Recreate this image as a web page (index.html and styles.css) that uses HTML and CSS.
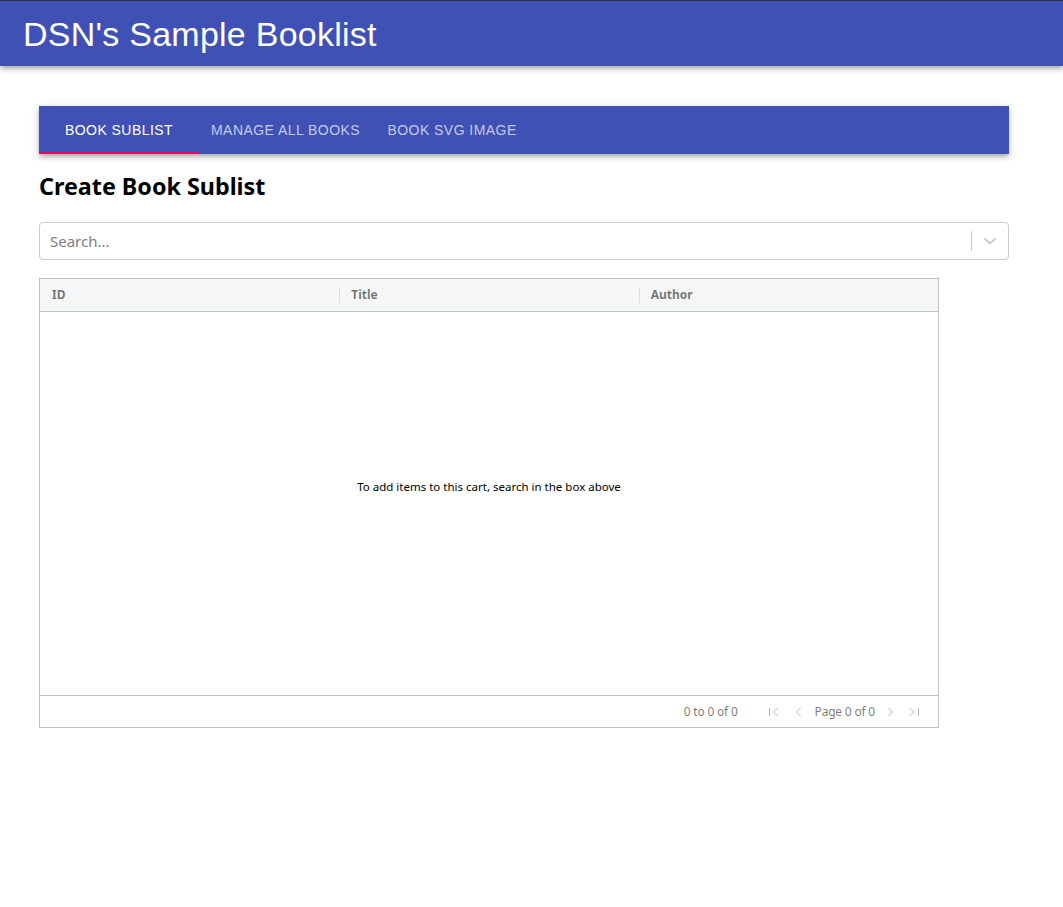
FILE: index.html
```html
<!DOCTYPE html>
<html>
<head>
<meta charset="utf-8">
<link rel="stylesheet" href="styles.css">
</head>
<body>
<header class="appbar">
  <h1 class="app-title">DSN's Sample Booklist</h1>
</header>
<main class="main">
  <nav class="tabs">
    <div class="tab active">BOOK SUBLIST</div>
    <div class="tab">MANAGE ALL BOOKS</div>
    <div class="tab">BOOK SVG IMAGE</div>
  </nav>
  <h2 class="page-title">Create Book Sublist</h2>
  <div class="select">
    <div class="select-value">Search...</div>
    <div class="select-indicators">
      <span class="select-sep"></span>
      <span class="select-arrow">
        <svg width="20" height="20" viewBox="0 0 20 20"><path d="M4.5 7.5 L10 12.5 L15.5 7.5" fill="none" stroke="#ccc" stroke-width="2"/></svg>
      </span>
    </div>
  </div>
  <div class="grid">
    <div class="grid-header">
      <div class="hcell">ID</div>
      <div class="hcell">Title</div>
      <div class="hcell">Author</div>
    </div>
    <div class="grid-body">
      <span class="overlay">To add items to this cart, search in the box above</span>
    </div>
    <div class="paging">
      <span class="row-summary">0 to 0 of 0</span>
      <svg class="pg-ic pg-first" width="12" height="12" viewBox="0 0 12 12"><path d="M1.5 2 V10 M9.5 2 L5.5 6 L9.5 10" fill="none" stroke="#b5b5b5" stroke-width="1"/></svg>
      <svg class="pg-ic pg-prev" width="12" height="12" viewBox="0 0 12 12"><path d="M8.5 2 L4.5 6 L8.5 10" fill="none" stroke="#b5b5b5" stroke-width="1"/></svg>
      <span class="pg-text">Page 0 of 0</span>
      <svg class="pg-ic pg-next" width="12" height="12" viewBox="0 0 12 12"><path d="M3.5 2 L7.5 6 L3.5 10" fill="none" stroke="#b5b5b5" stroke-width="1"/></svg>
      <svg class="pg-ic pg-last" width="12" height="12" viewBox="0 0 12 12"><path d="M1.5 2 L5.5 6 L1.5 10 M10.5 2 V10" fill="none" stroke="#b5b5b5" stroke-width="1"/></svg>
    </div>
  </div>
</main>
</body>
</html>
```
FILE: styles.css
```css
html, body {
  margin: 0;
  padding: 0;
  background: #fff;
}
body {
  font-family: "Noto Sans", "DejaVu Sans", sans-serif;
  color: #000;
}
.appbar {
  height: 65px;
  border-top: 1px solid #333;
  background: #3f51b5;
  box-shadow: 0 2px 4px -1px rgba(0,0,0,0.2), 0 4px 5px 0 rgba(0,0,0,0.14), 0 1px 10px 0 rgba(0,0,0,0.12);
  display: flex;
  align-items: center;
  padding-left: 23px;
}
.app-title {
  margin: 0;
  font-family: "Liberation Sans", Arial, sans-serif;
  font-weight: 400;
  font-size: 34px;
  letter-spacing: 0.25px;
  color: #fff;
  line-height: 1;
}
.main {
  width: 970px;
  margin-left: 39px;
  padding-top: 40px;
}
.tabs {
  display: flex;
  height: 48px;
  background: #3f51b5;
  box-shadow: 0 2px 4px -1px rgba(0,0,0,0.2), 0 4px 5px 0 rgba(0,0,0,0.14), 0 1px 10px 0 rgba(0,0,0,0.12);
}
.tab {
  min-width: 160px;
  padding: 0 12px;
  box-sizing: border-box;
  display: flex;
  align-items: center;
  justify-content: center;
  font-family: "Liberation Sans", Arial, sans-serif;
  font-size: 14px;
  letter-spacing: 0.45px;
  color: rgba(255,255,255,0.7);
  border-bottom: 2px solid transparent;
  padding-top: 2px;
}
.tab.active {
  color: #fff;
  border-bottom-color: #f50057;
}
.page-title {
  margin: 17px 0 21px;
  font-size: 23.3px;
  font-weight: 700;
  line-height: 30px;
}
.select {
  height: 38px;
  box-sizing: border-box;
  border: 1px solid #ccc;
  border-radius: 4px;
  display: flex;
  align-items: center;
}
.select-value {
  flex: 1;
  padding-left: 10px;
  font-size: 15px;
  color: #808080;
}
.select-indicators {
  display: flex;
  align-items: center;
  align-self: stretch;
}
.select-sep {
  width: 1px;
  height: 20px;
  background: #ccc;
}
.select-arrow {
  width: 36px;
  display: flex;
  justify-content: center;
}
.grid {
  margin-top: 18px;
  width: 900px;
  height: 450px;
  box-sizing: border-box;
  border: 1px solid #bdc3c7;
  display: flex;
  flex-direction: column;
}
.grid-header {
  height: 33px;
  box-sizing: border-box;
  background: #f5f7f7;
  border-bottom: 1px solid #bdc3c7;
  display: flex;
}
.hcell {
  width: 300px;
  box-sizing: border-box;
  padding-left: 12px;
  padding-bottom: 2px;
  font-size: 12px;
  font-weight: 700;
  color: rgba(0,0,0,0.54);
  display: flex;
  align-items: center;
  position: relative;
}
.hcell::after {
  content: "";
  position: absolute;
  right: -1px;
  top: 8px;
  height: 16px;
  width: 1px;
  background: rgba(189,195,199,0.5);
}
.grid-body {
  flex: 1;
  display: flex;
  align-items: center;
  justify-content: center;
  padding-bottom: 34px;
}
.overlay {
  font-size: 11.5px;
  color: #000;
}
.paging {
  height: 32px;
  box-sizing: border-box;
  border-top: 1px solid #bdc3c7;
  display: flex;
  align-items: center;
  justify-content: flex-end;
  padding-right: 18px;
  font-size: 12px;
  color: rgba(0,0,0,0.54);
}
.row-summary {
  margin-right: 30px;
  letter-spacing: -0.2px;
}
.pg-ic {
  display: block;
}
.pg-prev {
  margin-left: 12px;
}
.pg-text {
  margin: 0 10px 0 11px;
  letter-spacing: -0.2px;
}
.pg-last {
  margin-left: 11px;
}
```
